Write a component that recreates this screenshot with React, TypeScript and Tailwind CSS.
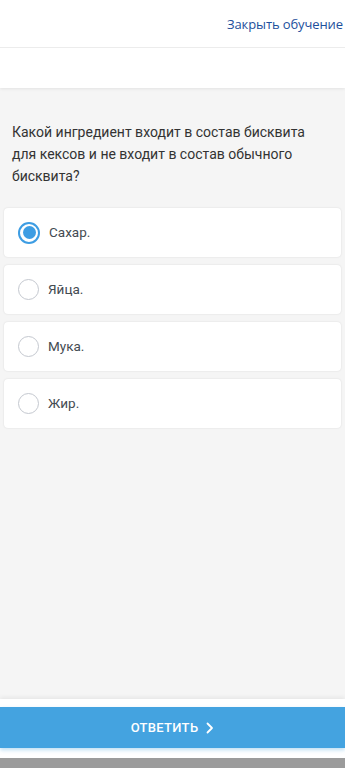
import React from "react";

const options = ["Сахар.", "Яйца.", "Мука.", "Жир."];

export default function App() {
  return (
    <div className="w-[345px] h-[768px] flex flex-col bg-[#f5f5f5] overflow-hidden font-['Roboto',sans-serif]">
      <div className="bg-white shadow-[0_1px_3px_rgba(0,0,0,0.08)] z-10">
        <div className="h-[48px] flex items-center justify-end pr-[2px] pt-[3px] border-b border-[#ececec]">
          <span className="text-[13px] text-[#1d4f9c] font-['Open_Sans',sans-serif] tracking-[-0.1px]">
            Закрыть обучение
          </span>
        </div>
        <div className="h-[40px]" />
      </div>

      <div className="flex-1 flex flex-col">
        <p className="pl-[12px] pr-[30px] pt-[33px] text-[14px] leading-[22px] text-[#333]">
          Какой ингредиент входит в состав бисквита для кексов и не входит в состав обычного бисквита?
        </p>
        <div className="mt-[21px] px-[4px] flex flex-col gap-[8px]">
          {options.map((o, i) => (
            <div
              key={o}
              className="h-[49px] bg-white rounded-[4px] shadow-[0_0_2px_rgba(0,0,0,0.12)] flex items-center pl-[14px]"
            >
              {i === 0 ? (
                <span className="w-[22px] h-[22px] rounded-full border-[2.5px] border-[#3d9de3] flex items-center justify-center">
                  <span className="w-[13px] h-[13px] rounded-full bg-[#3d9de3]" />
                </span>
              ) : (
                <span className="w-[21px] h-[21px] rounded-full border-[1.5px] border-[#c4c8cf]" />
              )}
              <span className="ml-[9px] text-[13.5px] text-[#444b52]">{o}</span>
            </div>
          ))}
        </div>
      </div>

      <div className="bg-white pt-[8px] pb-[10px] shadow-[0_-2px_4px_rgba(0,0,0,0.06)]">
        <button className="w-full h-[41px] bg-[#44a3e0] shadow-[0_2px_4px_rgba(68,163,224,0.35)] flex items-center justify-center gap-[8px] text-white text-[13px] font-medium tracking-[0.3px]">
          ОТВЕТИТЬ
          <svg width="8" height="12" viewBox="0 0 8 12" fill="none">
            <path d="M1.5 1.5 L6 6 L1.5 10.5" stroke="white" strokeWidth="1.8" strokeLinecap="round" strokeLinejoin="round" />
          </svg>
        </button>
      </div>
      <div className="h-[10px] bg-[#9b9b9b]" />
    </div>
  );
}
